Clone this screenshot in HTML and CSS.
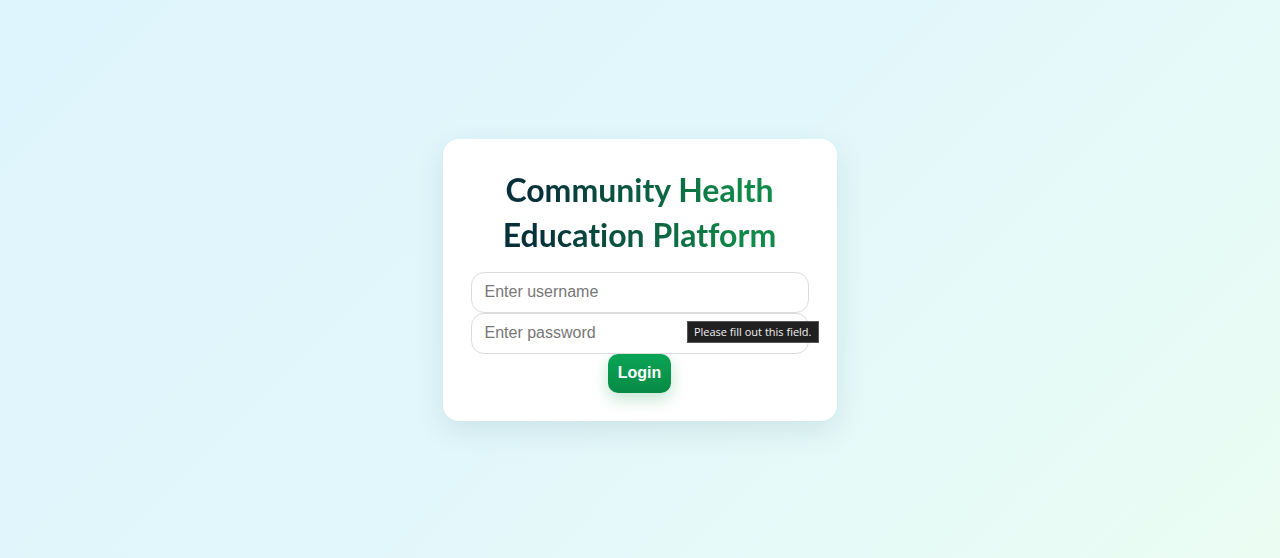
FILE: index.html
```html
<!DOCTYPE html>
<html lang="en">
<head>
<meta charset="utf-8">
<title>Login</title>
<link rel="stylesheet" href="styles.css">
</head>
<body>
<main class="page">
  <form class="card">
    <h1 class="title">Community Health Education Platform</h1>
    <input class="field" type="text" placeholder="Enter username">
    <div class="field-wrap">
      <input class="field" type="password" placeholder="Enter password">
      <span class="tooltip">Please fill out this field.</span>
    </div>
    <button class="btn" type="button">Login</button>
  </form>
</main>
</body>
</html>
```
FILE: styles.css
```css
* { box-sizing: border-box; }
html, body { margin: 0; height: 100%; }
body {
  background: linear-gradient(135deg, #dff5fd 0%, #e2f7fb 50%, #ebfdf3 100%);
  font-family: "Liberation Sans", Arial, sans-serif;
}
.page {
  height: 558px;
  display: flex;
  align-items: center;
  justify-content: center;
}
.card {
  width: 394px;
  background: #fff;
  border-radius: 16px;
  padding: 28px 28px 28px;
  box-shadow: 0 10px 30px rgba(0, 60, 80, 0.10);
  display: flex;
  flex-direction: column;
  align-items: center;
  margin-top: 1px;
  margin-left: -1px;
}
.title {
  margin: 0 0 15px;
  width: 100%;
  text-align: center;
  font-family: "Lato", "Open Sans", sans-serif;
  font-weight: 700;
  font-size: 32px;
  line-height: 45px;
  font-variant-ligatures: none;
  background: linear-gradient(90deg, #07303a 20%, #0f8a48 80%);
  -webkit-background-clip: text;
  background-clip: text;
  color: transparent;
}
.field-wrap { position: relative; width: 100%; }
.field {
  width: 100%;
  height: 41px;
  border: 1px solid #dcdcdc;
  border-radius: 13px;
  padding: 0 13px;
  font-family: "Liberation Sans", Arial, sans-serif;
  font-size: 16px;
  color: #333;
  background: #fff;
  outline: none;
}
.field::placeholder { color: #777; }
.tooltip {
  position: absolute;
  right: -10px;
  top: 8px;
  background: #202020;
  color: #f0f0f0;
  font-family: "Open Sans", "DejaVu Sans", sans-serif;
  font-size: 11px;
  line-height: 20px;
  padding: 0 6px;
  border: 1px solid #555;
  white-space: nowrap;
}
.btn {
  width: 63px;
  height: 39px;
  border: none;
  border-radius: 10px;
  background: linear-gradient(180deg, #0aa456 0%, #078a45 100%);
  color: #fff;
  font-family: "Liberation Sans", Arial, sans-serif;
  font-weight: 700;
  font-size: 16px;
  box-shadow: 0 6px 16px rgba(10, 150, 80, 0.25);
  cursor: pointer;
}
```
